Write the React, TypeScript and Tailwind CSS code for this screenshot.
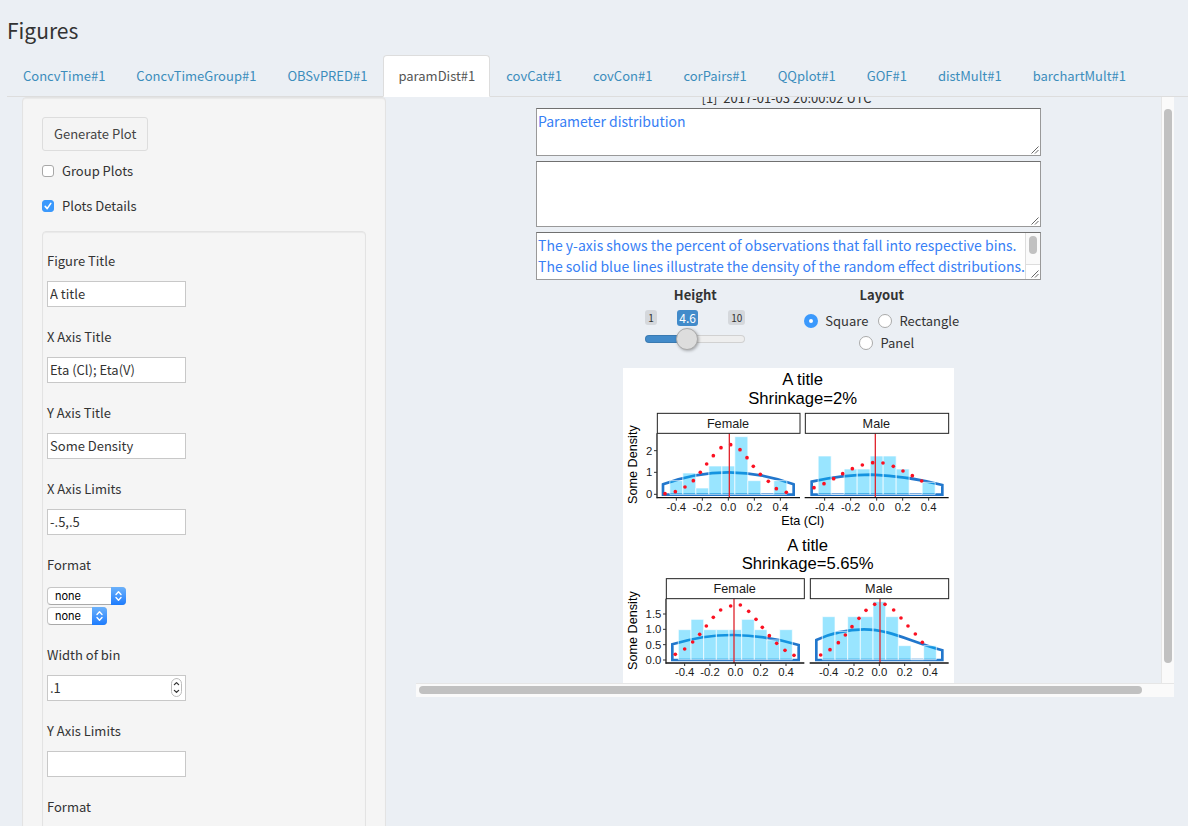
import React, { useState } from "react";

const TABS = [
  "ConcvTime#1", "ConcvTimeGroup#1", "OBSvPRED#1", "paramDist#1", "covCat#1", "covCon#1",
  "corPairs#1", "QQplot#1", "GOF#1", "distMult#1", "barchartMult#1",
];

type Point = [number, number];

interface PanelData {
  label: string;
  left: number;
  right: number;
  top: number;
  zeroX: number;
  unit: number;
  bars: number[];
  curve: string;
  dots: Point[];
  mean: number;
}

// Chart coordinates: three drawing units per CSS pixel.
// Bars run from -0.4 to 0.4 in steps of 0.1, as heights above the base line.
const PANELS: PanelData[] = [
  {
    label: "Female", left: 103, right: 531, top: 136, zeroX: 316, unit: 39,
    bars: [41, 64, 19, 85, 85, 173, 41, 0, 41],
    curve: "M120 349 Q218 313 316 313 T512 349 V380 H120 Z",
    dots: [[126, 377], [157, 371], [186, 357], [211, 338], [232, 313], [251, 288], [271, 263], [294, 239], [323, 230], [351, 245], [372, 269], [391, 295], [412, 319], [436, 340], [460, 362], [490, 373]],
    mean: 319,
  },
  {
    label: "Male", left: 547, right: 977, top: 136, zeroX: 761, unit: 39,
    bars: [115, 0, 76, 76, 115, 115, 76, 0, 36],
    curve: "M566 341 Q660 320 746 320 Q850 324 958 351 V380 H566 Z",
    dots: [[573, 359], [603, 347], [632, 332], [659, 317], [688, 302], [718, 291], [749, 284], [780, 285], [811, 295], [840, 309], [868, 323], [896, 339]],
    mean: 757,
  },
  {
    label: "Female", left: 130, right: 544, top: 632, zeroX: 337, unit: 38,
    bars: [90, 121, 90, 90, 90, 121, 90, 59, 90],
    curve: "M148 829 Q240 801 329 801 Q430 802 527 831 V876 H148 Z",
    dots: [[157, 859], [185, 843], [209, 822], [230, 799], [250, 774], [271, 748], [293, 726], [323, 714], [352, 711], [377, 730], [399, 754], [418, 778], [439, 803], [461, 826], [486, 847], [513, 862]],
    mean: 333,
  },
  {
    label: "Male", left: 562, right: 977, top: 632, zeroX: 769, unit: 38,
    bars: [129, 85, 129, 129, 174, 129, 42, 0, 42],
    curve: "M580 816 Q650 784 723 784 C800 784 860 820 958 847 V876 H580 Z",
    dots: [[593, 861], [621, 845], [646, 824], [667, 801], [687, 776], [708, 751], [729, 727], [755, 709], [786, 709], [812, 726], [834, 750], [855, 774], [877, 798], [898, 823]],
    mean: 771,
  },
];

function Panel({ data }: { data: PanelData }) {
  const { label, left, right, top, zeroX, unit, bars, curve, dots, mean } = data;
  const base = top + 243;
  const axis = top + 253;
  return (
    <g>
      <path d={curve} fill="none" stroke="#2277cc" strokeWidth={8} />
      {bars.map((height, i) => {
        const center = zeroX + (i - 4) * unit;
        const half = unit / 2;
        return (
          <path
            key={i}
            d={`M${center - half} ${base}V${base - height}H${center + half}V${base}Z`}
            fill="#00bfff"
            fillOpacity={0.4}
            stroke="#ffffff"
            strokeWidth={2}
          />
        );
      })}
      {dots.map(([x, y]) => (
        <circle key={x} cx={x} cy={y} r={5.5} fill="#fb1021" />
      ))}
      <path d={`M${mean} ${top + 60}V${axis}`} stroke="#e02830" strokeWidth={4} />
      <rect x={left} y={top} width={right - left} height={60} fill="#fff" stroke="#222" strokeWidth={3} />
      <text x={(left + right) / 2 - 2} y={top + 43} textAnchor="middle" fontSize={38} fill="#1a1a1a">{label}</text>
      <path d={`M${left - 2} ${axis}H${right}`} stroke="#111" strokeWidth={4} />
      {["-0.4", "-0.2", "0.0", "0.2", "0.4"].map((tick, i) => {
        const x = zeroX + (i - 2) * 2 * unit;
        return (
          <g key={tick}>
            <path d={`M${x} ${axis}v9`} stroke="#333" strokeWidth={3} />
            <text x={x} y={axis + 40} textAnchor="middle" fontSize={34} fill="#1a1a1a">{tick}</text>
          </g>
        );
      })}
    </g>
  );
}

function YAxis({ x, top, ticks }: { x: number; top: number; ticks: [string, number][] }) {
  return (
    <g>
      <path d={`M${x} ${top}v195`} stroke="#222" strokeWidth={4} />
      {ticks.map(([label, y]) => (
        <g key={label}>
          <path d={`M${x} ${y}h-9`} stroke="#333" strokeWidth={3} />
          <text x={x - 14} y={y + 12} textAnchor="end" fontSize={34} fill="#1a1a1a">{label}</text>
        </g>
      ))}
    </g>
  );
}

function DistributionChart() {
  return (
    <svg
      viewBox="0 0 993 945"
      className="block w-[331px] bg-white"
      fontFamily="'Liberation Sans', Arial, sans-serif"
      role="img"
      aria-label="Parameter distribution plots"
    >
      <g fontSize={50} textAnchor="middle">
        <text x={539} y={51}>A title</text>
        <text x={539} y={108}>Shrinkage=2%</text>
        <text x={554} y={549}>A title</text>
        <text x={554} y={603}>Shrinkage=5.65%</text>
      </g>
      <g fontSize={38} textAnchor="middle">
        <text x={539} y={472}>Eta (Cl)</text>
        <text transform="translate(42 290) rotate(-90)">Some Density</text>
        <text transform="translate(42 788) rotate(-90)">Some Density</text>
      </g>
      {PANELS.map((data, i) => <Panel key={i} data={data} />)}
      <YAxis x={102} top={196} ticks={[["0", 379], ["1", 313], ["2", 248]]} />
      <YAxis x={129} top={692} ticks={[["0.0", 876], ["0.5", 830], ["1.0", 784], ["1.5", 738]]} />
    </svg>
  );
}

function CheckRow({ id, label, defaultChecked }: { id: string; label: string; defaultChecked?: boolean }) {
  return (
    <div className="flex h-5 items-center gap-2">
      <span className="relative flex size-3">
        <input
          id={id}
          type="checkbox"
          defaultChecked={defaultChecked}
          className="peer size-3 appearance-none rounded-[3px] border border-[#a8a8a8] bg-white checked:border-[#3b99fc] checked:bg-[#3b99fc]"
        />
        <svg viewBox="0 0 12 12" className="pointer-events-none absolute inset-0 hidden peer-checked:block" fill="none" stroke="#fff" strokeWidth="1.6" strokeLinecap="round" strokeLinejoin="round">
          <path d="M3.2 6.4 5.2 8.6 8.8 3.4" />
        </svg>
      </span>
      <label htmlFor={id}>{label}</label>
    </div>
  );
}

function Field({ id, label, children }: { id: string; label: string; children: React.ReactNode }) {
  return (
    <div className="flex flex-col items-start gap-2.5">
      <label htmlFor={id}>{label}</label>
      {children}
    </div>
  );
}

const inputClass = "h-[26px] w-[139px] border border-[#c8c8c8] bg-white px-0.5 pb-0.5 text-[#333] outline-none";

function TextField({ id, label, value = "" }: { id: string; label: string; value?: string }) {
  return (
    <Field id={id} label={label}>
      <input id={id} type="text" defaultValue={value} className={inputClass} />
    </Field>
  );
}

function FormatSelect({ id, label, wide }: { id: string; label: string; wide?: boolean }) {
  return (
    <div className={`relative flex h-5 items-end ${wide ? "w-[79px]" : "w-[60px]"}`}>
      <select
        id={id}
        aria-label={label}
        className="h-[18px] w-full appearance-none rounded-[4px] border border-[#c6c6c6] border-b-[#a9a9a9] bg-white pl-[7px] font-[Inter,sans-serif] text-[11px] leading-4 text-black outline-none"
      >
        <option>none</option>
        <option>comma</option>
      </select>
      <span className="pointer-events-none absolute right-0 bottom-0 flex h-[18px] w-[15px] items-center justify-center rounded-r-[4px] bg-gradient-to-b from-[#6bb1fa] to-[#1a7bfd]">
        <svg viewBox="0 0 9 12" className="h-3 w-[9px]" fill="none" stroke="#fff" strokeWidth="1.4" strokeLinecap="round" strokeLinejoin="round">
          <path d="M2 4.4 4.5 1.8 7 4.4M2 7.6 4.5 10.2 7 7.6" />
        </svg>
      </span>
    </div>
  );
}

function Note({ label, value, height, scroll }: { label: string; value?: string; height: string; scroll?: boolean }) {
  return (
    <div className="relative flex">
      <textarea
        aria-label={label}
        defaultValue={value}
        className={`${height} w-full resize-none overflow-hidden border border-[#999] border-t-[#707070] bg-white px-px py-0.5 text-[14px] leading-[21px] whitespace-pre text-[#3880f5] outline-none`}
      />
      {scroll && (
        <span className="absolute top-px right-px bottom-px flex w-[15px] flex-col border-l border-[#ddd] bg-white">
          <span className="flex h-8 justify-center border-b border-[#ddd] bg-[#fafafa] pt-[3px]">
            <span className="h-[18px] w-2 rounded-full bg-[#c1c1c1]" />
          </span>
        </span>
      )}
      <svg viewBox="0 0 8 8" className="absolute right-0.5 bottom-0.5 size-2" stroke="#555" strokeWidth="0.9">
        <path d="M0.5 7.5 7.5 0.5M4 7.5 7.5 4" />
      </svg>
    </div>
  );
}

function Radio({ value, checked, onSelect }: { value: string; checked: boolean; onSelect: (v: string) => void }) {
  return (
    <span className="flex h-[22px] items-center gap-[7px]">
      <input
        id={`layout-${value}`}
        type="radio"
        name="layout"
        checked={checked}
        onChange={() => onSelect(value)}
        className="size-3.5 appearance-none rounded-full border border-[#aaa] bg-white checked:border-[5px] checked:border-[#3b99fc]"
      />
      <label htmlFor={`layout-${value}`}>{value}</label>
    </span>
  );
}

export default function App() {
  const [layout, setLayout] = useState("Square");

  return (
    <div className="flex h-screen flex-col overflow-hidden bg-[#ebeff4] font-['Noto_Sans_CJK_SC','Noto_Sans',sans-serif] text-[13px] leading-5 text-[#333]">
      <h1 className="px-[7px] pt-4 text-[21px] leading-7">Figures</h1>

      <nav className="mt-[11px] ml-[7px] border-b border-[#ddd] pl-px">
        <ul className="-mb-px flex gap-px">
          {TABS.map((tab) => (
            <li key={tab}>
              <a
                href={`#${tab.replace("#", "-")}`}
                className={
                  tab === "paramDist#1"
                    ? "block rounded-t-[4px] border border-[#ddd] border-b-white bg-white px-3.5 py-2.5 text-[#555]"
                    : "block border border-transparent px-3.5 py-2.5 text-[#3c8dbc]"
                }
              >
                {tab}
              </a>
            </li>
          ))}
        </ul>
      </nav>

      <main className="flex min-h-0 flex-1 items-start gap-[30px] pr-3.5 pl-[22px]">
        <form className="flex w-[364px] shrink-0 flex-col rounded-[4px] border border-[#e3e3e3] bg-[#f5f5f5] p-[19px] shadow-[inset_0_1px_1px_rgba(0,0,0,0.05)]">
          <button type="button" className="h-[34px] self-start rounded-[3px] border border-[#ddd] bg-[#f4f4f4] px-[11px] text-[#444]">
            Generate Plot
          </button>
          <div className="mt-2.5 flex flex-col gap-[15px]">
            <CheckRow id="group-plots" label="Group Plots" />
            <CheckRow id="plot-details" label="Plots Details" defaultChecked />
          </div>
          <div className="mt-[15px] flex flex-col gap-5 rounded-[4px] border border-[#e3e3e3] px-1 pt-[19px] pb-5 shadow-[inset_0_1px_1px_rgba(0,0,0,0.05)]">
            <TextField id="figure-title" label="Figure Title" value="A title" />
            <TextField id="x-title" label="X Axis Title" value="Eta (Cl); Eta(V)" />
            <TextField id="y-title" label="Y Axis Title" value="Some Density" />
            <TextField id="x-limits" label="X Axis Limits" value="-.5,.5" />
            <Field id="x-format" label="Format">
              <div className="flex flex-col">
                <FormatSelect id="x-format" label="X axis format" wide />
                <FormatSelect id="x-format-unit" label="X axis format option" />
              </div>
            </Field>
            <Field id="bin-width" label="Width of bin">
              <div className="relative flex">
                <input
                  id="bin-width"
                  type="number"
                  step="any"
                  defaultValue=".1"
                  className={`${inputClass} [appearance:textfield] [&::-webkit-inner-spin-button]:appearance-none`}
                />
                <svg viewBox="0 0 11 19" className="absolute top-[3px] right-1 h-[19px] w-[11px]" fill="none" strokeLinecap="round" strokeLinejoin="round">
                  <rect x="0.5" y="0.5" width="10" height="18" rx="5" fill="#fff" stroke="#bbb" />
                  <path d="M3.4 6.6 5.5 4.6 7.6 6.6M3.4 12.4 5.5 14.4 7.6 12.4" stroke="#333" strokeWidth="1.3" />
                </svg>
              </div>
            </Field>
            <TextField id="y-limits" label="Y Axis Limits" />
            <Field id="y-format" label="Format">
              <FormatSelect id="y-format" label="Y axis format" wide />
            </Field>
          </div>
        </form>

        <section className="flex h-[600px] min-w-0 flex-1 flex-col">
          <div className="flex min-h-0 flex-1">
            <div className="flex flex-1 flex-col items-center overflow-hidden">
              <p className="-mt-[9px] h-5 shrink-0 pr-1 whitespace-pre">[1]  2017-01-03 20:00:02 UTC</p>
              <div className="flex w-[505px] flex-col gap-[5px]">
                <Note label="Plot heading" value="Parameter distribution" height="h-12" />
                <Note label="Plot notes" height="h-[66px]" />
                <Note
                  label="Plot footnote"
                  height="h-12"
                  scroll
                  value={"The y-axis shows the percent of observations that fall into respective bins.\nThe solid blue lines illustrate the density of the random effect distributions."}
                />
              </div>
              <div className="mt-[5px] grid w-[373px] grid-cols-2">
                <div className="flex flex-col items-center">
                  <label htmlFor="height" className="font-bold">Height</label>
                  <div className="relative mt-[5px] flex h-4 w-[100px] items-start justify-between text-[10px] leading-[15px]">
                    <span className="rounded-[3px] bg-[#d5d8dc] px-[3px]">1</span>
                    <span className="absolute left-8 rounded-[3px] bg-[#428bca] px-0.5 text-[12px] leading-4 text-white">4.6</span>
                    <span className="rounded-[3px] bg-[#d5d8dc] px-[3px]">10</span>
                  </div>
                  <input
                    id="height"
                    type="range"
                    min={1}
                    max={10}
                    step={0.1}
                    defaultValue={4.6}
                    className="mt-px h-6 w-[100px] appearance-none bg-transparent outline-none [&::-webkit-slider-runnable-track]:h-2 [&::-webkit-slider-runnable-track]:rounded-full [&::-webkit-slider-runnable-track]:bg-[linear-gradient(to_right,#428bca_42px,#eee_42px)] [&::-webkit-slider-runnable-track]:shadow-[inset_0_0_0_1px_rgba(0,0,0,0.12)] [&::-webkit-slider-thumb]:-mt-[7px] [&::-webkit-slider-thumb]:size-[22px] [&::-webkit-slider-thumb]:appearance-none [&::-webkit-slider-thumb]:rounded-full [&::-webkit-slider-thumb]:border [&::-webkit-slider-thumb]:border-[#aaa] [&::-webkit-slider-thumb]:bg-[#ddd] [&::-webkit-slider-thumb]:shadow-[1px_1px_3px_rgba(0,0,0,0.3)]"
                  />
                </div>
                <fieldset className="flex flex-col items-center">
                  <legend className="mx-auto font-bold">Layout</legend>
                  <div className="mt-[5px] flex gap-2.5">
                    <Radio value="Square" checked={layout === "Square"} onSelect={setLayout} />
                    <Radio value="Rectangle" checked={layout === "Rectangle"} onSelect={setLayout} />
                  </div>
                  <div className="pl-2.5">
                    <Radio value="Panel" checked={layout === "Panel"} onSelect={setLayout} />
                  </div>
                </fieldset>
              </div>
              <div className="mt-3.5 shrink-0">
                <DistributionChart />
              </div>
            </div>
            <div className="flex w-[13px] justify-center border-l border-[#e6e6e6] bg-[#fafafa] pt-3 pb-5">
              <div className="w-2 rounded-full bg-[#c1c1c1]" />
            </div>
          </div>
          <div className="flex h-3.5 border-t border-[#e6e6e6] bg-[#fafafa] pt-0.5 pr-8 pl-[3px]">
            <div className="h-2 flex-1 rounded-full bg-[#c1c1c1]" />
          </div>
        </section>
      </main>
    </div>
  );
}
